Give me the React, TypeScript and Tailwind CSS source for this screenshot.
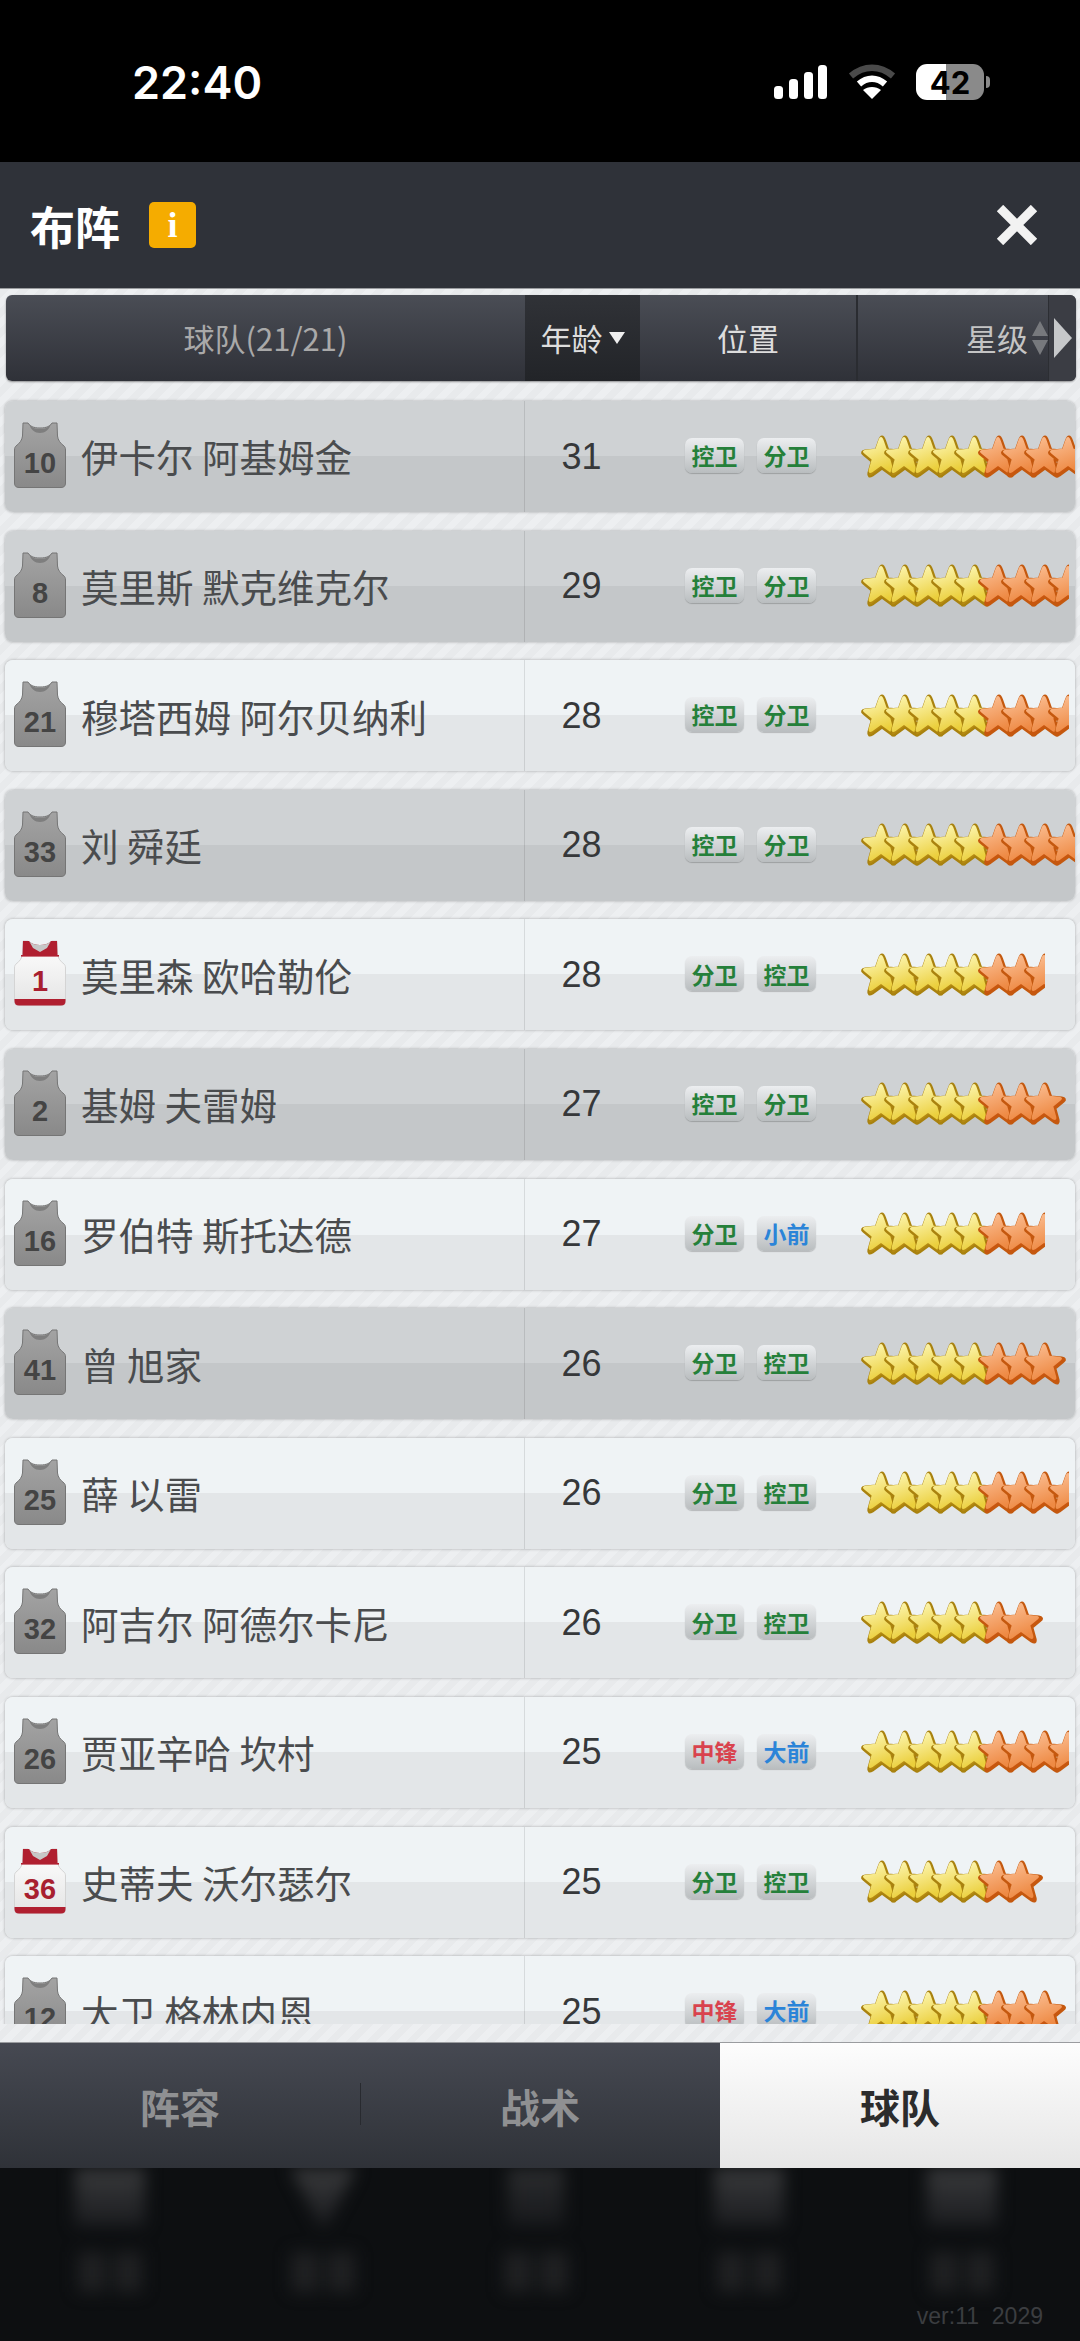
import React from 'react';

type Tag = { label: string; color: 'green' | 'red' | 'blue' };

type Player = {
  no: number;
  name: string;
  age: number;
  tags: [Tag, Tag];
  stars: number;
  benched?: boolean;
  red?: boolean;
};

const kw: Tag = { label: '控卫', color: 'green' };
const fw: Tag = { label: '分卫', color: 'green' };
const xq: Tag = { label: '小前', color: 'blue' };
const df: Tag = { label: '大前', color: 'blue' };
const zf: Tag = { label: '中锋', color: 'red' };

const players: Player[] = [
  { no: 10, name: '伊卡尔 阿基姆金', age: 31, tags: [kw, fw], stars: 9, benched: true },
  { no: 8, name: '莫里斯 默克维克尔', age: 29, tags: [kw, fw], stars: 8.5, benched: true },
  { no: 21, name: '穆塔西姆 阿尔贝纳利', age: 28, tags: [kw, fw], stars: 8.5 },
  { no: 33, name: '刘 舜廷', age: 28, tags: [kw, fw], stars: 9, benched: true },
  { no: 1, name: '莫里森 欧哈勒伦', age: 28, tags: [fw, kw], stars: 7.5, red: true },
  { no: 2, name: '基姆 夫雷姆', age: 27, tags: [kw, fw], stars: 8, benched: true },
  { no: 16, name: '罗伯特 斯托达德', age: 27, tags: [fw, xq], stars: 7.5 },
  { no: 41, name: '曾 旭家', age: 26, tags: [fw, kw], stars: 8, benched: true },
  { no: 25, name: '薛 以雷', age: 26, tags: [fw, kw], stars: 8.5 },
  { no: 32, name: '阿吉尔 阿德尔卡尼', age: 26, tags: [fw, kw], stars: 7 },
  { no: 26, name: '贾亚辛哈 坎村', age: 25, tags: [zf, df], stars: 8.5 },
  { no: 36, name: '史蒂夫 沃尔瑟尔', age: 25, tags: [fw, kw], stars: 7, red: true },
  { no: 12, name: '大卫 格林内恩', age: 25, tags: [zf, df], stars: 8 },
];

const tagColors = {
  green: 'text-[#25803a]',
  red: 'text-[#d9434e]',
  blue: 'text-[#2b84d8]',
};

const STAR_PATH =
  'M22 1.5 C23.3 1.5 24.2 3 25.2 6 L28.2 14.6 L38.8 15.6 C42.2 16 43 17.8 40.5 19.8 L32.4 26.4 L35.6 38 C36.3 41.5 34.5 42.4 31.6 40.6 L22 33.6 L12.4 40.6 C9.5 42.4 7.7 41.5 8.4 38 L11.6 26.4 L3.5 19.8 C1 17.8 1.8 16 5.2 15.6 L15.8 14.6 L18.8 6 C19.8 3 20.7 1.5 22 1.5 Z';

const Star = ({ kind }: { kind: 'gold' | 'orange' }) => (
  <svg width="44" height="44" viewBox="0 0 44 44" className="shrink-0">
    <defs>
      <linearGradient id="star-gold" x1="0" y1="0" x2="0.4" y2="1">
        <stop offset="0" stopColor="#fffbc0" />
        <stop offset="1" stopColor="#ebcf3c" />
      </linearGradient>
      <linearGradient id="star-orange" x1="0" y1="0" x2="0.4" y2="1">
        <stop offset="0" stopColor="#fcc39a" />
        <stop offset="1" stopColor="#ee8a44" />
      </linearGradient>
    </defs>
    <path
      d={STAR_PATH}
      fill={kind === 'gold' ? '#b58a12' : '#c9560f'}
      stroke={kind === 'gold' ? '#a9820f' : '#c4590f'}
      strokeWidth="2"
      strokeLinejoin="round"
    />
    <path
      d={STAR_PATH}
      transform="translate(21 20) scale(0.9) translate(-22 -21.5)"
      fill={kind === 'gold' ? 'url(#star-gold)' : 'url(#star-orange)'}
    />
  </svg>
);

const Stars = ({ count }: { count: number }) => {
  const whole = Math.floor(count);
  const hasHalf = count > whole;
  return (
    <div className="flex ml-[44px] shrink-0">
      {Array.from({ length: whole }).map((_, i) => (
        <div key={i} className={i === 0 ? 'shrink-0' : 'shrink-0 -ml-[20.7px]'}>
          <Star kind={i < 5 ? 'gold' : 'orange'} />
        </div>
      ))}
      {hasHalf && (
        <div className="shrink-0 -ml-[20.7px] w-[22px] overflow-hidden">
          <Star kind="orange" />
        </div>
      )}
    </div>
  );
};

const Jersey = ({ no, red }: { no: number; red?: boolean }) => (
  <div className="relative w-[52px] h-[66px] shrink-0 -mt-[3px]">
    <svg width="52" height="66" viewBox="0 0 52 66">
      <defs>
        <linearGradient id="jersey-gray" x1="0" y1="0" x2="0" y2="1">
          <stop offset="0" stopColor="#a3a3a3" />
          <stop offset="1" stopColor="#898989" />
        </linearGradient>
        <linearGradient id="jersey-white" x1="0" y1="0" x2="0" y2="1">
          <stop offset="0" stopColor="#ffffff" />
          <stop offset="1" stopColor="#e4e4e4" />
        </linearGradient>
      </defs>
      <path
        d="M9 1 L14 1 C16 4 19 6 26 6 C33 6 36 4 38 1 L43 1 L43.5 14 C44 18 46 21 50 24 C51 25 51.5 26 51.5 28 L51.5 61 C51.5 64 50 65.5 47 65.5 L5 65.5 C2 65.5 0.5 64 0.5 61 L0.5 28 C0.5 26 1 25 2 24 C6 21 8 18 8.5 14 Z"
        fill={red ? 'url(#jersey-white)' : 'url(#jersey-gray)'}
        stroke={red ? '#d4d4d4' : '#757575'}
        strokeWidth="1"
      />
      {red ? (
        <>
          <path d="M9 1 L15 1 C18 4 22 5 26 5 C30 5 34 4 37 1 L43 1 L43.5 15 L8.5 15 Z" fill="#b01f30" />
          <rect x="7" y="15" width="38" height="1.6" fill="#b01f30" />
          <path d="M15 1 C18 4 22 5 26 5 C30 5 34 4 37 1 L33 8 L26 12 L19 8 Z" fill="#c7c7c7" />
          <path d="M0.5 59 L51.5 59 L51.5 61 C51.5 64 50 65.5 47 65.5 L5 65.5 C2 65.5 0.5 64 0.5 61 Z" fill="#b01f30" />
        </>
      ) : (
        <path d="M15 2 C18 6 21 7 26 7 C31 7 34 6 37 2 C35 8 31 11 26 11 C21 11 17 8 15 2 Z" fill="#7e7e7e" />
      )}
    </svg>
    <span
      className={`absolute left-0 right-0 top-[26px] h-[30px] leading-[30px] text-center text-[29px] font-bold font-['Liberation_Sans',sans-serif] ${
        red ? 'text-[#a81f30]' : 'text-[#444444]'
      }`}
    >
      {no}
    </span>
  </div>
);

const PlayerRow = ({ player }: { player: Player }) => (
  <div
    className={`flex items-center h-[111px] shrink-0 rounded-[8px] overflow-hidden shadow-[0_0_3px_rgba(0,0,0,0.3)] ${
      player.benched
        ? 'bg-[linear-gradient(#cfd2d4_50%,#c4c7c9_50%)]'
        : 'bg-[linear-gradient(#eff3f5_50%,#e3e6e8_50%)]'
    }`}
  >
    <div className="flex items-center w-[520px] h-full shrink-0 pl-[9px] border-r border-black/10">
      <Jersey no={player.no} red={player.red} />
      <span className="ml-[15px] text-[37.5px] text-[#4a4c4e] whitespace-nowrap">{player.name}</span>
    </div>
    <div className="w-[113px] shrink-0 text-center text-[36px] text-[#36383a] font-['Liberation_Sans',sans-serif]">
      {player.age}
    </div>
    <div className="flex gap-[13px] ml-[47px] shrink-0 -mt-[2px]">
      {player.tags.map((tag, i) => (
        <span
          key={i}
          className={`w-[59px] h-[35px] rounded-[7px] flex items-center justify-center text-[23px] font-bold bg-[linear-gradient(#eceef0,#b9bdbf)] shadow-[0_1px_1px_rgba(0,0,0,0.2)] ${tagColors[tag.color]}`}
        >
          {tag.label}
        </span>
      ))}
    </div>
    <Stars count={player.stars} />
  </div>
);

const StatusBar = () => (
  <div className="h-[162px] bg-black flex items-center justify-between pl-[132px] pr-[90px] pt-[2px] shrink-0">
    <span className="text-white text-[45px] font-semibold font-['Inter',sans-serif] leading-none">22:40</span>
    <div className="flex items-center gap-[20px]">
      <svg width="54" height="36" viewBox="0 0 54 36" fill="#fff">
        <rect x="0" y="22" width="9" height="13" rx="3.5" />
        <rect x="15" y="15" width="9" height="20" rx="3.5" />
        <rect x="30" y="8" width="9" height="27" rx="3.5" />
        <rect x="44" y="1" width="9" height="34" rx="3.5" />
      </svg>
      <svg width="48" height="36" viewBox="0 0 48 36" fill="none">
        <path d="M3 12 C16 1 32 1 45 12" stroke="#4a4a4a" strokeWidth="6.5" strokeLinecap="butt" />
        <path d="M11 20 C19 13 29 13 37 20" stroke="#fff" strokeWidth="6.5" />
        <path d="M24 35 L15 26 C20 22 28 22 33 26 Z" fill="#fff" />
      </svg>
      <div className="flex items-center">
        <div className="relative w-[68px] h-[36px] rounded-[11px] overflow-hidden bg-[linear-gradient(90deg,#fff_44%,#8a8a8a_44%)] flex items-center justify-center">
          <span className="text-black text-[31px] font-bold font-['Inter',sans-serif] leading-none">42</span>
        </div>
        <div className="w-[4px] h-[12px] rounded-r-full bg-[#8a8a8a] ml-[2px]" />
      </div>
    </div>
  </div>
);

const TitleBar = () => (
  <div className="h-[126px] bg-[#2f3239] flex items-center justify-between pl-[30px] pr-[42px] shrink-0">
    <div className="flex items-center gap-[29px]">
      <span className="text-white text-[45px] font-bold leading-none">布阵</span>
      <span className="w-[47px] h-[46px] rounded-[5px] bg-[#f5ac00] flex items-center justify-center text-white text-[36px] font-bold font-['Liberation_Serif',serif]">
        i
      </span>
    </div>
    <svg width="42" height="40" viewBox="0 0 42 40">
      <path d="M4 3 L38 37 M38 3 L4 37" stroke="#f2f2f2" strokeWidth="9" />
    </svg>
  </div>
);

const HeaderBar = () => (
  <div className="flex h-[86px] ml-[6px] mr-[4px] mt-[6px] rounded-[6px] overflow-hidden bg-[linear-gradient(#4a4d55,#2f3138)] shadow-[0_1px_2px_rgba(0,0,0,0.4)] shrink-0">
    <div className="w-[519px] flex items-center justify-center text-[31px] text-[#a9a9a9]">球队(21/21)</div>
    <div className="w-[115px] flex items-center justify-center gap-[6px] text-[31px] text-[#dddddd] bg-[linear-gradient(#303237,#222428)]">
      年龄
      <svg width="16" height="12" viewBox="0 0 16 12">
        <path d="M0 0 H16 L8 12 Z" fill="#eeeeee" />
      </svg>
    </div>
    <div className="w-[218px] flex items-center justify-center text-[31px] text-[#dddddd] border-r-2 border-[#2a2c31]">位置</div>
    <div className="flex-1 flex items-center justify-end text-[31px] text-[#c4c4c4] gap-[4px]">
      星级
      <svg width="16" height="34" viewBox="0 0 16 34" fill="#77797d">
        <path d="M8 0 L16 15 H0 Z" />
        <path d="M8 34 L16 19 H0 Z" />
      </svg>
    </div>
    <div className="w-[28px] flex items-center justify-center bg-[#3b3d44] border-l border-[#2c2e33]">
      <svg width="20" height="40" viewBox="0 0 20 40">
        <path d="M1 0 L19 20 L1 40 Z" fill="#c6c8ca" />
      </svg>
    </div>
  </div>
);

const TabBar = () => (
  <div className="flex h-[126px] shrink-0 border-t border-[#9a9c9f]">
    <div className="w-[360px] flex items-center justify-center bg-[linear-gradient(#464952,#2f3238)]">
      <span className="text-[40px] font-bold text-[#8f9092]">阵容</span>
    </div>
    <div className="w-[360px] flex items-center justify-center bg-[linear-gradient(#464952,#2f3238)] relative">
      <span className="absolute left-0 top-[40px] h-[42px] w-px bg-[#282a2f]" />
      <span className="text-[40px] font-bold text-[#8f9092]">战术</span>
    </div>
    <div className="w-[360px] flex items-center justify-center bg-[linear-gradient(#fdfdfd,#e6e6e6)]">
      <span className="text-[40px] font-bold text-[#2c2c2c]">球队</span>
    </div>
  </div>
);

const Footer = () => (
  <div className="flex-1 bg-[#0d0f11] overflow-hidden flex flex-col">
    <div className="grid grid-cols-5 w-[1064px] ml-[4px] h-[131px] shrink-0">
      {[0, 1, 2, 3, 4].map((i) => (
        <div key={i} className="flex flex-col items-center blur-[8px]">
          <div
            className={`h-[58px] bg-[linear-gradient(#38393b,#1c1d20)] ${
              i === 1 ? 'w-[66px] [clip-path:polygon(0_0,100%_0,55%_100%,45%_100%)]' : i === 2 ? 'w-[56px] opacity-70' : 'w-[70px]'
            }`}
          />
          <div className="flex gap-[8px] mt-[26px]">
            <div className="w-[28px] h-[40px] bg-[#1f2022]" />
            <div className="w-[28px] h-[40px] bg-[#1f2022]" />
          </div>
        </div>
      ))}
    </div>
    <div className="text-right pr-[37px] text-[23px] text-[#3b3d40] font-['Liberation_Sans',sans-serif] whitespace-pre">
      ver:11  2029
    </div>
  </div>
);

export default function App() {
  return (
    <div className="w-[1080px] h-[2341px] flex flex-col overflow-hidden bg-black font-['Noto_Sans_CJK_SC','Liberation_Sans',sans-serif]">
      <StatusBar />
      <TitleBar />
      <div className="h-[1754px] shrink-0 flex flex-col border-t border-[#9a9c9f] bg-[repeating-linear-gradient(135deg,#e8eaec_0px,#e8eaec_7px,#edeff1_7px,#edeff1_14px)]">
        <HeaderBar />
        <div className="h-[1643px] pt-[20px] px-[5px] flex flex-col gap-[18.6px] overflow-hidden shrink-0">
          {players.map((p) => (
            <PlayerRow key={p.no} player={p} />
          ))}
        </div>
      </div>
      <TabBar />
      <Footer />
    </div>
  );
}
